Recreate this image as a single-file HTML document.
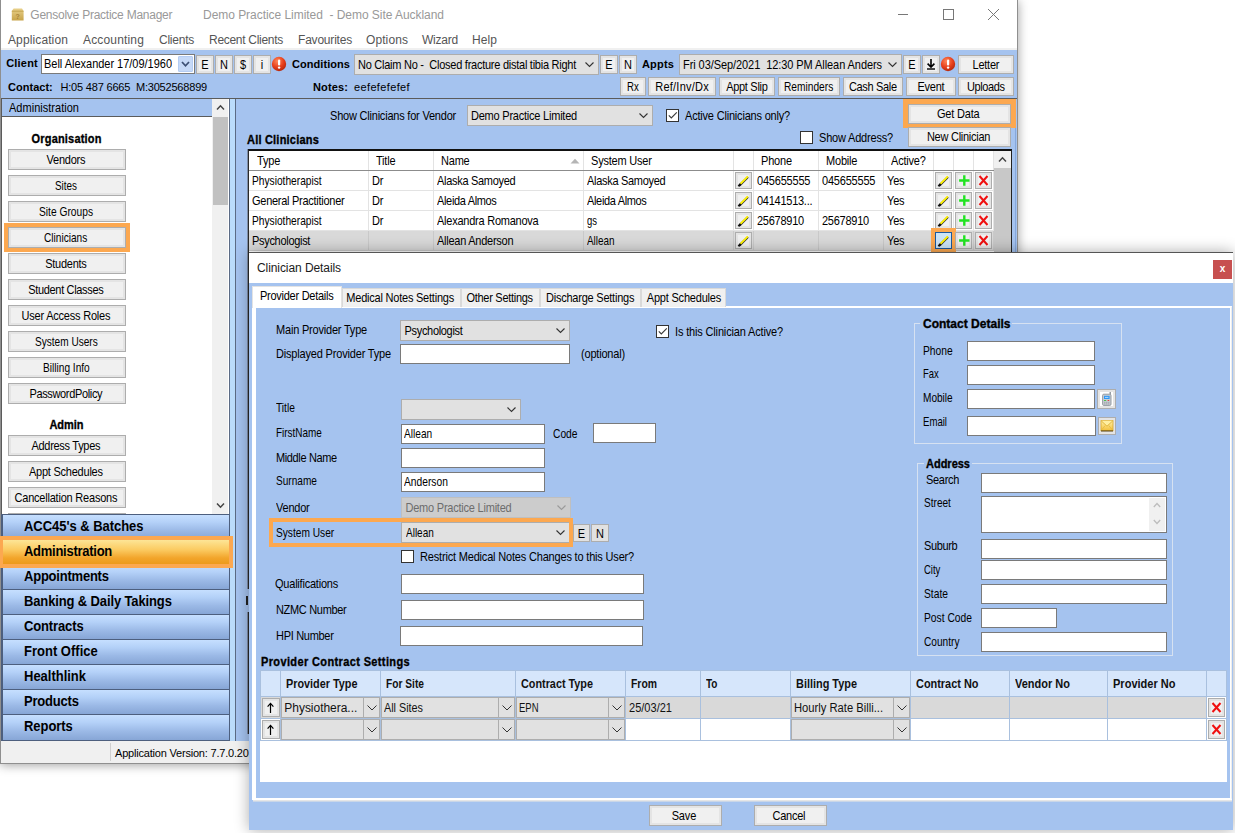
<!DOCTYPE html>
<html><head><meta charset='utf-8'><title>Gensolve Practice Manager</title><style>
html,body{margin:0;padding:0;background:#fff;}
body{width:1235px;height:833px;position:relative;overflow:hidden;font-family:'Liberation Sans',sans-serif;}
div,svg,span.t{position:absolute;}
span.t{white-space:pre;}
.btn{box-sizing:border-box;border:1px solid #ADADAD;background:#F0F0F0;box-shadow:inset 0 0 0 2px #E4E4E4;}
</style></head><body>
<div style='left:0px;top:0px;width:1018px;height:764px;background:#fff;box-shadow:0 1px 10px rgba(0,0,0,.38);'></div>
<div style='left:0px;top:0px;width:1px;height:764px;background:#8f8f8f'></div>
<div style='left:1017px;top:0px;width:1px;height:764px;background:#8f8f8f'></div>
<div style='left:0px;top:763px;width:1018px;height:1px;background:#8f8f8f'></div>
<svg style='left:11px;top:8px' width='13' height='13' viewBox='0 0 13 13'><defs><linearGradient id='tg' x1='0' y1='0' x2='0' y2='1'><stop offset='0' stop-color='#E8D08A'/><stop offset='1' stop-color='#C7A349'/></linearGradient></defs><path d='M0.8 3 L2.6 0.6 H11 L12.6 3 V12.6 H0.8 Z' fill='url(#tg)'/><path d='M0.8 3.2 H12.6' stroke='#B8963E' stroke-width='0.7'/><text x='6.7' y='10.8' font-size='7' font-family='Liberation Sans' fill='#A8853A' text-anchor='middle' font-weight='bold'>?</text></svg>
<span class='t' style="top:7px;line-height:16px;height:16px;font:normal 12px/16px 'Liberation Sans',sans-serif;color:#999;letter-spacing:-0.243px;left:30.3px;">Gensolve Practice Manager</span>
<span class='t' style="top:7px;line-height:16px;height:16px;font:normal 12px/16px 'Liberation Sans',sans-serif;color:#999;letter-spacing:-0.041px;left:203px;">Demo Practice Limited  - Demo Site Auckland</span>
<svg style='left:897px;top:9px' width='12' height='12' viewBox='0 0 12 12'><path d='M1 5.5 H11' stroke='#777' stroke-width='1'/></svg>
<svg style='left:942px;top:8px' width='12' height='12' viewBox='0 0 12 12'><rect x='1.5' y='1.5' width='10' height='10' fill='none' stroke='#777' stroke-width='1'/></svg>
<svg style='left:987px;top:8px' width='13' height='13' viewBox='0 0 13 13'><path d='M1 1 L12 12 M12 1 L1 12' stroke='#777' stroke-width='1'/></svg>
<span class='t' style="top:32px;line-height:16px;height:16px;font:normal 12px/16px 'Liberation Sans',sans-serif;color:#555;letter-spacing:0.116px;left:8px;">Application</span>
<span class='t' style="top:32px;line-height:16px;height:16px;font:normal 12px/16px 'Liberation Sans',sans-serif;color:#555;letter-spacing:0.163px;left:83px;">Accounting</span>
<span class='t' style="top:32px;line-height:16px;height:16px;font:normal 12px/16px 'Liberation Sans',sans-serif;color:#555;letter-spacing:-0.241px;left:159px;">Clients</span>
<span class='t' style="top:32px;line-height:16px;height:16px;font:normal 12px/16px 'Liberation Sans',sans-serif;color:#555;letter-spacing:-0.289px;left:209px;">Recent Clients</span>
<span class='t' style="top:32px;line-height:16px;height:16px;font:normal 12px/16px 'Liberation Sans',sans-serif;color:#555;letter-spacing:-0.203px;left:298px;">Favourites</span>
<span class='t' style="top:32px;line-height:16px;height:16px;font:normal 12px/16px 'Liberation Sans',sans-serif;color:#555;letter-spacing:0.092px;left:366px;">Options</span>
<span class='t' style="top:32px;line-height:16px;height:16px;font:normal 12px/16px 'Liberation Sans',sans-serif;color:#555;letter-spacing:-0.224px;left:422px;">Wizard</span>
<span class='t' style="top:32px;line-height:16px;height:16px;font:normal 12px/16px 'Liberation Sans',sans-serif;color:#555;letter-spacing:0.078px;left:472px;">Help</span>
<div style='left:1px;top:48px;width:1016px;height:2px;background:#F0F0F0'></div>
<div style='left:1px;top:50px;width:1016px;height:48px;background:#A5C3EF'></div>
<span class='t' style="top:55.5px;line-height:15px;height:15px;font:bold 11px/15px 'Liberation Sans',sans-serif;color:#000;letter-spacing:0.206px;left:6.2px;">Client</span>
<div style='left:41px;top:54px;width:154px;height:20px;background:#fff;border:1px solid #7A7A7A;box-sizing:border-box'></div>
<span class='t' style="top:57px;line-height:15px;height:15px;font:normal 11px/15px 'Liberation Sans',sans-serif;color:#000;letter-spacing:-0.018px;left:44px;transform:scale(1.0000,1.09);transform-origin:0 11.31px;">Bell Alexander 17/09/1960</span>
<div style='left:178px;top:56px;width:15px;height:16px;background:#C6D9F7;border:1px solid #B4CCF3;box-sizing:border-box;border-radius:1px'></div>
<svg style='left:181px;top:61px' width='9' height='7' viewBox='0 0 9 7'><path d='M1 1 L4.5 4.8 L8 1' fill='none' stroke='#3C4F73' stroke-width='1.7'/></svg>
<div class='btn' style='left:196px;top:55px;width:18px;height:19px;'></div>
<span class='t' style="top:58.2px;line-height:15px;height:15px;font:normal 11px/15px 'Liberation Sans',sans-serif;color:#000;left:201.33px;transform:scale(1.0000,1.09);transform-origin:0 11.31px;">E</span>
<div class='btn' style='left:215px;top:55px;width:18px;height:19px;'></div>
<span class='t' style="top:58.2px;line-height:15px;height:15px;font:normal 11px/15px 'Liberation Sans',sans-serif;color:#000;left:220.02px;transform:scale(1.0000,1.09);transform-origin:0 11.31px;">N</span>
<div class='btn' style='left:234px;top:55px;width:18px;height:19px;'></div>
<span class='t' style="top:58.2px;line-height:15px;height:15px;font:normal 11px/15px 'Liberation Sans',sans-serif;color:#000;left:239.94px;transform:scale(1.0000,1.09);transform-origin:0 11.31px;">$</span>
<div class='btn' style='left:253px;top:55px;width:18px;height:19px;'></div>
<span class='t' style="top:58.2px;line-height:15px;height:15px;font:normal 11px/15px 'Liberation Sans',sans-serif;color:#000;left:260.77px;transform:scale(1.0000,1.09);transform-origin:0 11.31px;">i</span>
<svg style='left:271px;top:56px' width='16' height='16' viewBox='0 0 16 16'><defs><radialGradient id='rg279' cx='40%' cy='30%' r='70%'><stop offset='0' stop-color='#FF8A5C'/><stop offset='0.6' stop-color='#E8401C'/><stop offset='1' stop-color='#B82A0E'/></radialGradient></defs><circle cx='8' cy='8' r='7.2' fill='url(#rg279)'/><rect x='7' y='3.5' width='2.2' height='6' rx='1' fill='#fff'/><circle cx='8.1' cy='11.6' r='1.2' fill='#fff'/></svg>
<span class='t' style="top:56.5px;line-height:15px;height:15px;font:bold 11px/15px 'Liberation Sans',sans-serif;color:#000;letter-spacing:0.056px;left:292px;">Conditions</span>
<div style='left:354px;top:54px;width:245px;height:21px;background:#E1E1E1;border:1px solid #ADADAD;box-sizing:border-box'></div>
<span class='t' style="top:57.75px;line-height:15px;height:15px;font:normal 11px/15px 'Liberation Sans',sans-serif;color:#000;letter-spacing:-0.255px;left:358px;transform:scale(1.0000,1.09);transform-origin:0 11.31px;">No Claim No -  Closed fracture distal tibia Right</span>
<svg style='left:585px;top:62.0px' width='9' height='6' viewBox='0 0 9 6'><path d='M0.5 0.5 L4.5 4.5 L8.5 0.5' fill='none' stroke='#333' stroke-width='1.1'/></svg>
<div class='btn' style='left:600px;top:55px;width:18px;height:19px;'></div>
<span class='t' style="top:58.2px;line-height:15px;height:15px;font:normal 11px/15px 'Liberation Sans',sans-serif;color:#000;left:605.33px;transform:scale(1.0000,1.09);transform-origin:0 11.31px;">E</span>
<div class='btn' style='left:619px;top:55px;width:18px;height:19px;'></div>
<span class='t' style="top:58.2px;line-height:15px;height:15px;font:normal 11px/15px 'Liberation Sans',sans-serif;color:#000;left:624.02px;transform:scale(1.0000,1.09);transform-origin:0 11.31px;">N</span>
<span class='t' style="top:56.5px;line-height:15px;height:15px;font:bold 11px/15px 'Liberation Sans',sans-serif;color:#000;letter-spacing:0.166px;left:642px;">Appts</span>
<div style='left:679px;top:54px;width:223px;height:21px;background:#E1E1E1;border:1px solid #ADADAD;box-sizing:border-box'></div>
<span class='t' style="top:57.75px;line-height:15px;height:15px;font:normal 11px/15px 'Liberation Sans',sans-serif;color:#000;letter-spacing:-0.072px;left:683px;transform:scale(1.0000,1.09);transform-origin:0 11.31px;">Fri 03/Sep/2021  12:30 PM Allean Anders</span>
<svg style='left:888px;top:62.0px' width='9' height='6' viewBox='0 0 9 6'><path d='M0.5 0.5 L4.5 4.5 L8.5 0.5' fill='none' stroke='#333' stroke-width='1.1'/></svg>
<div class='btn' style='left:903px;top:55px;width:18px;height:19px;'></div>
<span class='t' style="top:58.2px;line-height:15px;height:15px;font:normal 11px/15px 'Liberation Sans',sans-serif;color:#000;left:908.33px;transform:scale(1.0000,1.09);transform-origin:0 11.31px;">E</span>
<div class='btn' style='left:922px;top:55px;width:18px;height:19px;'></div>
<svg style='left:924px;top:57px' width='14' height='14' viewBox='0 0 14 14'><path d='M7 2 V9.5 M3.6 6.6 L7 10 L10.4 6.6' fill='none' stroke='#000' stroke-width='1.6'/><path d='M3 12 H11' stroke='#000' stroke-width='1.4'/></svg>
<svg style='left:940px;top:56px' width='16' height='16' viewBox='0 0 16 16'><defs><radialGradient id='rg948' cx='40%' cy='30%' r='70%'><stop offset='0' stop-color='#FF8A5C'/><stop offset='0.6' stop-color='#E8401C'/><stop offset='1' stop-color='#B82A0E'/></radialGradient></defs><circle cx='8' cy='8' r='7.2' fill='url(#rg948)'/><rect x='7' y='3.5' width='2.2' height='6' rx='1' fill='#fff'/><circle cx='8.1' cy='11.6' r='1.2' fill='#fff'/></svg>
<div class='btn' style='left:958px;top:55px;width:56px;height:19px;'></div>
<span class='t' style="top:57.5px;line-height:15px;height:15px;font:normal 11px/15px 'Liberation Sans',sans-serif;color:#000;letter-spacing:-0.232px;left:972.51px;transform:scale(1.0000,1.09);transform-origin:0 11.31px;">Letter</span>
<span class='t' style="top:79.5px;line-height:15px;height:15px;font:bold 11px/15px 'Liberation Sans',sans-serif;color:#000;letter-spacing:0.024px;left:8px;">Contact:</span>
<span class='t' style="top:79.5px;line-height:15px;height:15px;font:normal 11px/15px 'Liberation Sans',sans-serif;color:#000;letter-spacing:-0.192px;left:60.5px;">H:05 487 6665  M:3052568899</span>
<span class='t' style="top:79.5px;line-height:15px;height:15px;font:bold 11px/15px 'Liberation Sans',sans-serif;color:#000;letter-spacing:0.128px;left:313px;">Notes:</span>
<span class='t' style="top:79.5px;line-height:15px;height:15px;font:normal 11px/15px 'Liberation Sans',sans-serif;color:#000;letter-spacing:0.364px;left:354px;">eefefefefef</span>
<div class='btn' style='left:620px;top:77px;width:26px;height:19px;'></div>
<span class='t' style="top:79.75px;line-height:15px;height:15px;font:normal 11px/15px 'Liberation Sans',sans-serif;color:#000;left:627.12px;transform:scale(0.8734,1.09);transform-origin:0 11.31px;">Rx</span>
<div class='btn' style='left:648px;top:77px;width:68px;height:19px;'></div>
<span class='t' style="top:79.75px;line-height:15px;height:15px;font:normal 11px/15px 'Liberation Sans',sans-serif;color:#000;letter-spacing:0.239px;left:655.24px;transform:scale(1.0000,1.09);transform-origin:0 11.31px;">Ref/Inv/Dx</span>
<div class='btn' style='left:719px;top:77px;width:56px;height:19px;'></div>
<span class='t' style="top:79.75px;line-height:15px;height:15px;font:normal 11px/15px 'Liberation Sans',sans-serif;color:#000;letter-spacing:-0.309px;left:726.22px;transform:scale(1.0000,1.09);transform-origin:0 11.31px;">Appt Slip</span>
<div class='btn' style='left:778px;top:77px;width:62px;height:19px;'></div>
<span class='t' style="top:79.75px;line-height:15px;height:15px;font:normal 11px/15px 'Liberation Sans',sans-serif;color:#000;left:784.38px;transform:scale(0.9260,1.09);transform-origin:0 11.31px;">Reminders</span>
<div class='btn' style='left:843px;top:77px;width:60px;height:19px;'></div>
<span class='t' style="top:79.75px;line-height:15px;height:15px;font:normal 11px/15px 'Liberation Sans',sans-serif;color:#000;letter-spacing:-0.335px;left:848.96px;transform:scale(1.0000,1.09);transform-origin:0 11.31px;">Cash Sale</span>
<div class='btn' style='left:906px;top:77px;width:50px;height:19px;'></div>
<span class='t' style="top:79.75px;line-height:15px;height:15px;font:normal 11px/15px 'Liberation Sans',sans-serif;color:#000;letter-spacing:-0.228px;left:917.39px;transform:scale(1.0000,1.09);transform-origin:0 11.31px;">Event</span>
<div class='btn' style='left:958px;top:77px;width:56px;height:19px;'></div>
<span class='t' style="top:79.75px;line-height:15px;height:15px;font:normal 11px/15px 'Liberation Sans',sans-serif;color:#000;letter-spacing:-0.373px;left:966.94px;transform:scale(1.0000,1.09);transform-origin:0 11.31px;">Uploads</span>
<div style='left:1px;top:98px;width:1016px;height:643px;background:#A5C3EF'></div>
<div style='left:1015px;top:98px;width:1px;height:643px;background:#86A8DC'></div>
<div style='left:1px;top:98px;width:229px;height:417px;background:#fff;border:1px solid #5b5b5b;box-sizing:border-box'></div>
<div style='left:2px;top:99px;width:210px;height:17px;background:#A5C3EF'></div>
<div style='left:2px;top:116px;width:210px;height:1px;background:#5b5b5b'></div>
<span class='t' style="top:100.5px;line-height:15px;height:15px;font:normal 11px/15px 'Liberation Sans',sans-serif;color:#000;letter-spacing:0.021px;left:9px;transform:scale(1.0000,1.09);transform-origin:0 11.31px;">Administration</span>
<div style='left:212px;top:99px;width:16px;height:415px;background:#F0F0F0'></div>
<div style='left:213px;top:117px;width:15px;height:88px;background:#C1C1C1'></div>
<svg style='left:216px;top:104px' width='9' height='7' viewBox='0 0 9 7'><path d='M1 5.5 L4.5 1.8 L8 5.5' fill='none' stroke='#444' stroke-width='1.5'/></svg>
<svg style='left:216px;top:502px' width='9' height='7' viewBox='0 0 9 7'><path d='M1 1.5 L4.5 5.2 L8 1.5' fill='none' stroke='#444' stroke-width='1.5'/></svg>
<span class='t' style="top:131.5px;line-height:15px;height:15px;font:bold 11px/15px 'Liberation Sans',sans-serif;color:#000;letter-spacing:0.180px;left:31.59px;transform:scale(1.0000,1.09);transform-origin:0 11.31px;-webkit-text-stroke:0.3px #000;">Organisation</span>
<div style='left:4px;top:223px;width:126px;height:29px;background:#FCA850'></div>
<div class='btn' style='left:8px;top:149px;width:118px;height:21px;'></div>
<span class='t' style="top:153.3px;line-height:15px;height:15px;font:normal 11px/15px 'Liberation Sans',sans-serif;color:#000;letter-spacing:-0.232px;left:46.51px;transform:scale(1.0000,1.09);transform-origin:0 11.31px;">Vendors</span>
<div class='btn' style='left:8px;top:175px;width:118px;height:21px;'></div>
<span class='t' style="top:179.3px;line-height:15px;height:15px;font:normal 11px/15px 'Liberation Sans',sans-serif;color:#000;left:55.00px;transform:scale(0.8991,1.09);transform-origin:0 11.31px;">Sites</span>
<div class='btn' style='left:8px;top:201px;width:118px;height:21px;'></div>
<span class='t' style="top:205.3px;line-height:15px;height:15px;font:normal 11px/15px 'Liberation Sans',sans-serif;color:#000;left:39.00px;transform:scale(0.9295,1.09);transform-origin:0 11.31px;">Site Groups</span>
<div class='btn' style='left:8px;top:227px;width:118px;height:21px;'></div>
<span class='t' style="top:231.3px;line-height:15px;height:15px;font:normal 11px/15px 'Liberation Sans',sans-serif;color:#000;left:44.38px;transform:scale(0.9187,1.09);transform-origin:0 11.31px;">Clinicians</span>
<div class='btn' style='left:8px;top:253px;width:118px;height:21px;'></div>
<span class='t' style="top:257.3px;line-height:15px;height:15px;font:normal 11px/15px 'Liberation Sans',sans-serif;color:#000;letter-spacing:-0.271px;left:45.24px;transform:scale(1.0000,1.09);transform-origin:0 11.31px;">Students</span>
<div class='btn' style='left:8px;top:279px;width:118px;height:21px;'></div>
<span class='t' style="top:283.3px;line-height:15px;height:15px;font:normal 11px/15px 'Liberation Sans',sans-serif;color:#000;letter-spacing:-0.341px;left:28.33px;transform:scale(1.0000,1.09);transform-origin:0 11.31px;">Student Classes</span>
<div class='btn' style='left:8px;top:305px;width:118px;height:21px;'></div>
<span class='t' style="top:309.3px;line-height:15px;height:15px;font:normal 11px/15px 'Liberation Sans',sans-serif;color:#000;letter-spacing:-0.210px;left:21.52px;transform:scale(1.0000,1.09);transform-origin:0 11.31px;">User Access Roles</span>
<div class='btn' style='left:8px;top:331px;width:118px;height:21px;'></div>
<span class='t' style="top:335.3px;line-height:15px;height:15px;font:normal 11px/15px 'Liberation Sans',sans-serif;color:#000;left:34.62px;transform:scale(0.9165,1.09);transform-origin:0 11.31px;">System Users</span>
<div class='btn' style='left:8px;top:357px;width:118px;height:21px;'></div>
<span class='t' style="top:361.3px;line-height:15px;height:15px;font:normal 11px/15px 'Liberation Sans',sans-serif;color:#000;left:42.62px;transform:scale(0.9209,1.09);transform-origin:0 11.31px;">Billing Info</span>
<div class='btn' style='left:8px;top:383px;width:118px;height:21px;'></div>
<span class='t' style="top:387.3px;line-height:15px;height:15px;font:normal 11px/15px 'Liberation Sans',sans-serif;color:#000;letter-spacing:-0.349px;left:29.45px;transform:scale(1.0000,1.09);transform-origin:0 11.31px;">PasswordPolicy</span>
<span class='t' style="top:417.5px;line-height:15px;height:15px;font:bold 11px/15px 'Liberation Sans',sans-serif;color:#000;letter-spacing:-0.047px;left:49.48px;transform:scale(1.0000,1.09);transform-origin:0 11.31px;-webkit-text-stroke:0.3px #000;">Admin</span>
<div class='btn' style='left:8px;top:435px;width:118px;height:21px;'></div>
<span class='t' style="top:439.3px;line-height:15px;height:15px;font:normal 11px/15px 'Liberation Sans',sans-serif;color:#000;letter-spacing:-0.293px;left:31.48px;transform:scale(1.0000,1.09);transform-origin:0 11.31px;">Address Types</span>
<div class='btn' style='left:8px;top:461px;width:118px;height:21px;'></div>
<span class='t' style="top:465.3px;line-height:15px;height:15px;font:normal 11px/15px 'Liberation Sans',sans-serif;color:#000;letter-spacing:-0.237px;left:29.01px;transform:scale(1.0000,1.09);transform-origin:0 11.31px;">Appt Schedules</span>
<div class='btn' style='left:8px;top:487px;width:118px;height:21px;'></div>
<span class='t' style="top:491.3px;line-height:15px;height:15px;font:normal 11px/15px 'Liberation Sans',sans-serif;color:#000;letter-spacing:-0.213px;left:14.52px;transform:scale(1.0000,1.09);transform-origin:0 11.31px;">Cancellation Reasons</span>
<div style='left:8px;top:513px;width:118px;height:1px;background:#ADADAD'></div>
<div style='left:230px;top:98px;width:5px;height:643px;background:#BBDCFB'></div>
<div style='left:229px;top:98px;width:1px;height:643px;background:#5b6b85'></div>
<div style='left:235px;top:98px;width:1px;height:643px;background:#5b6b85'></div>
<div style='left:1px;top:98px;width:1016px;height:1px;background:#5b5b5b'></div>
<div style='left:1px;top:514px;width:229px;height:227px;background:#4d5f7e'></div>
<div style='left:3px;top:515px;width:226px;height:24px;background:linear-gradient(#C6DFFF 0%,#B4D1F8 30%,#9BB9E6 65%,#87A6D6 100%)'></div>
<div style='left:3px;top:540px;width:226px;height:24px;background:linear-gradient(#C6DFFF 0%,#B4D1F8 30%,#9BB9E6 65%,#87A6D6 100%)'></div>
<div style='left:3px;top:565px;width:226px;height:24px;background:linear-gradient(#C6DFFF 0%,#B4D1F8 30%,#9BB9E6 65%,#87A6D6 100%)'></div>
<div style='left:3px;top:590px;width:226px;height:24px;background:linear-gradient(#C6DFFF 0%,#B4D1F8 30%,#9BB9E6 65%,#87A6D6 100%)'></div>
<div style='left:3px;top:615px;width:226px;height:24px;background:linear-gradient(#C6DFFF 0%,#B4D1F8 30%,#9BB9E6 65%,#87A6D6 100%)'></div>
<div style='left:3px;top:640px;width:226px;height:24px;background:linear-gradient(#C6DFFF 0%,#B4D1F8 30%,#9BB9E6 65%,#87A6D6 100%)'></div>
<div style='left:3px;top:665px;width:226px;height:24px;background:linear-gradient(#C6DFFF 0%,#B4D1F8 30%,#9BB9E6 65%,#87A6D6 100%)'></div>
<div style='left:3px;top:690px;width:226px;height:24px;background:linear-gradient(#C6DFFF 0%,#B4D1F8 30%,#9BB9E6 65%,#87A6D6 100%)'></div>
<div style='left:3px;top:715px;width:226px;height:25px;background:linear-gradient(#C6DFFF 0%,#B4D1F8 30%,#9BB9E6 65%,#87A6D6 100%)'></div>
<div style='left:0px;top:536px;width:233px;height:32px;background:#FCA850'></div>
<div style='left:3px;top:540px;width:226px;height:24px;background:linear-gradient(#FDE596 0%,#FBCB62 40%,#F2A52B 75%,#EC9A1C 100%)'></div>
<span class='t' style="top:517.5px;line-height:17px;height:17px;font:bold 13px/17px 'Liberation Sans',sans-serif;color:#000;letter-spacing:-0.038px;left:24px;transform:scale(1.0000,1.1);transform-origin:0 13.00px;">ACC45&#x27;s &amp; Batches</span>
<span class='t' style="top:542.5px;line-height:17px;height:17px;font:bold 13px/17px 'Liberation Sans',sans-serif;color:#000;letter-spacing:-0.267px;left:24px;transform:scale(1.0000,1.1);transform-origin:0 13.00px;">Administration</span>
<span class='t' style="top:567.5px;line-height:17px;height:17px;font:bold 13px/17px 'Liberation Sans',sans-serif;color:#000;letter-spacing:-0.220px;left:24px;transform:scale(1.0000,1.1);transform-origin:0 13.00px;">Appointments</span>
<span class='t' style="top:592.5px;line-height:17px;height:17px;font:bold 13px/17px 'Liberation Sans',sans-serif;color:#000;letter-spacing:-0.130px;left:24px;transform:scale(1.0000,1.1);transform-origin:0 13.00px;">Banking &amp; Daily Takings</span>
<span class='t' style="top:617.5px;line-height:17px;height:17px;font:bold 13px/17px 'Liberation Sans',sans-serif;color:#000;letter-spacing:-0.132px;left:24px;transform:scale(1.0000,1.1);transform-origin:0 13.00px;">Contracts</span>
<span class='t' style="top:642.5px;line-height:17px;height:17px;font:bold 13px/17px 'Liberation Sans',sans-serif;color:#000;letter-spacing:0.007px;left:24px;transform:scale(1.0000,1.1);transform-origin:0 13.00px;">Front Office</span>
<span class='t' style="top:667.5px;line-height:17px;height:17px;font:bold 13px/17px 'Liberation Sans',sans-serif;color:#000;letter-spacing:-0.013px;left:24px;transform:scale(1.0000,1.1);transform-origin:0 13.00px;">Healthlink</span>
<span class='t' style="top:692.5px;line-height:17px;height:17px;font:bold 13px/17px 'Liberation Sans',sans-serif;color:#000;letter-spacing:-0.199px;left:24px;transform:scale(1.0000,1.1);transform-origin:0 13.00px;">Products</span>
<span class='t' style="top:717.5px;line-height:17px;height:17px;font:bold 13px/17px 'Liberation Sans',sans-serif;color:#000;letter-spacing:-0.054px;left:24px;transform:scale(1.0000,1.1);transform-origin:0 13.00px;">Reports</span>
<div style='left:1px;top:741px;width:1016px;height:22px;background:#F0F0F0'></div>
<div style='left:110px;top:743px;width:1px;height:18px;background:#D0D0D0'></div>
<span class='t' style="top:745.8px;line-height:15px;height:15px;font:normal 11px/15px 'Liberation Sans',sans-serif;color:#000;letter-spacing:-0.200px;left:115px;">Application Version: 7.7.0.2021</span>
<span class='t' style="top:108.5px;line-height:15px;height:15px;font:normal 11px/15px 'Liberation Sans',sans-serif;color:#000;letter-spacing:-0.210px;left:330px;transform:scale(1.0000,1.09);transform-origin:0 11.31px;">Show Clinicians for Vendor</span>
<div style='left:467px;top:105px;width:186px;height:21px;background:#E1E1E1;border:1px solid #ADADAD;box-sizing:border-box'></div>
<span class='t' style="top:108.75px;line-height:15px;height:15px;font:normal 11px/15px 'Liberation Sans',sans-serif;color:#000;letter-spacing:-0.222px;left:471px;transform:scale(1.0000,1.09);transform-origin:0 11.31px;">Demo Practice Limited</span>
<svg style='left:639px;top:113.0px' width='9' height='6' viewBox='0 0 9 6'><path d='M0.5 0.5 L4.5 4.5 L8.5 0.5' fill='none' stroke='#333' stroke-width='1.1'/></svg>
<div style='left:666px;top:109px;width:13px;height:13px;background:#fff;border:1px solid #333;box-sizing:border-box'><svg width='13' height='13' viewBox='0 0 13 13' style='left:-1px;top:-1px'><path d='M2.8 6.4 L5.3 8.9 L10.8 3.3' fill='none' stroke='#3a3a3a' stroke-width='1.15'/></svg></div>
<span class='t' style="top:108.5px;line-height:15px;height:15px;font:normal 11px/15px 'Liberation Sans',sans-serif;color:#000;letter-spacing:-0.193px;left:685px;transform:scale(1.0000,1.09);transform-origin:0 11.31px;">Active Clinicians only?</span>
<div style='left:903px;top:99px;width:113px;height:29px;background:#FCA850'></div>
<div class='btn' style='left:908px;top:104px;width:103px;height:20px;'></div>
<span class='t' style="top:106.7px;line-height:15px;height:15px;font:normal 11px/15px 'Liberation Sans',sans-serif;color:#000;letter-spacing:-0.191px;left:936.95px;transform:scale(1.0000,1.09);transform-origin:0 11.31px;">Get Data</span>
<div class='btn' style='left:908px;top:127px;width:103px;height:20px;'></div>
<span class='t' style="top:129.7px;line-height:15px;height:15px;font:normal 11px/15px 'Liberation Sans',sans-serif;color:#000;letter-spacing:-0.261px;left:926.94px;transform:scale(1.0000,1.09);transform-origin:0 11.31px;">New Clinician</span>
<div style='left:800px;top:131px;width:13px;height:13px;background:#fff;border:1px solid #333;box-sizing:border-box'></div>
<span class='t' style="top:130.5px;line-height:15px;height:15px;font:normal 11px/15px 'Liberation Sans',sans-serif;color:#000;letter-spacing:-0.188px;left:819px;transform:scale(1.0000,1.09);transform-origin:0 11.31px;">Show Address?</span>
<span class='t' style="top:132.5px;line-height:15px;height:15px;font:bold 11px/15px 'Liberation Sans',sans-serif;color:#000;letter-spacing:0.209px;left:247px;transform:scale(1.0000,1.09);transform-origin:0 11.31px;-webkit-text-stroke:0.3px #000;">All Clinicians</span>
<div style='left:247px;top:149px;width:765px;height:110px;background:#fff;border:1px solid #222;border-top:2px solid #111;border-left:2px solid #2a2a2a;box-sizing:border-box'></div>
<div style='left:247px;top:149px;width:1px;height:110px;background:#7f8da6'></div>
<div style='left:249px;top:170px;width:745px;height:1px;background:#8c8c8c'></div>
<div style='left:368px;top:151px;width:1px;height:19px;background:#E3E3E3'></div>
<div style='left:433px;top:151px;width:1px;height:19px;background:#E3E3E3'></div>
<div style='left:583px;top:151px;width:1px;height:19px;background:#E3E3E3'></div>
<div style='left:733px;top:151px;width:1px;height:19px;background:#E3E3E3'></div>
<div style='left:753px;top:151px;width:1px;height:19px;background:#E3E3E3'></div>
<div style='left:818px;top:151px;width:1px;height:19px;background:#E3E3E3'></div>
<div style='left:883px;top:151px;width:1px;height:19px;background:#E3E3E3'></div>
<div style='left:933px;top:151px;width:1px;height:19px;background:#E3E3E3'></div>
<div style='left:953px;top:151px;width:1px;height:19px;background:#E3E3E3'></div>
<div style='left:973px;top:151px;width:1px;height:19px;background:#E3E3E3'></div>
<div style='left:993px;top:151px;width:1px;height:19px;background:#E3E3E3'></div>
<span class='t' style="top:153.5px;line-height:15px;height:15px;font:normal 11px/15px 'Liberation Sans',sans-serif;color:#000;letter-spacing:-0.200px;left:257px;transform:scale(1.0000,1.09);transform-origin:0 11.31px;">Type</span>
<span class='t' style="top:153.5px;line-height:15px;height:15px;font:normal 11px/15px 'Liberation Sans',sans-serif;color:#000;letter-spacing:-0.200px;left:376px;transform:scale(1.0000,1.09);transform-origin:0 11.31px;">Title</span>
<span class='t' style="top:153.5px;line-height:15px;height:15px;font:normal 11px/15px 'Liberation Sans',sans-serif;color:#000;letter-spacing:-0.200px;left:441px;transform:scale(1.0000,1.09);transform-origin:0 11.31px;">Name</span>
<span class='t' style="top:153.5px;line-height:15px;height:15px;font:normal 11px/15px 'Liberation Sans',sans-serif;color:#000;letter-spacing:-0.200px;left:591px;transform:scale(1.0000,1.09);transform-origin:0 11.31px;">System User</span>
<span class='t' style="top:153.5px;line-height:15px;height:15px;font:normal 11px/15px 'Liberation Sans',sans-serif;color:#000;letter-spacing:-0.200px;left:761px;transform:scale(1.0000,1.09);transform-origin:0 11.31px;">Phone</span>
<span class='t' style="top:153.5px;line-height:15px;height:15px;font:normal 11px/15px 'Liberation Sans',sans-serif;color:#000;letter-spacing:-0.200px;left:826px;transform:scale(1.0000,1.09);transform-origin:0 11.31px;">Mobile</span>
<span class='t' style="top:153.5px;line-height:15px;height:15px;font:normal 11px/15px 'Liberation Sans',sans-serif;color:#000;letter-spacing:-0.200px;left:891px;transform:scale(1.0000,1.09);transform-origin:0 11.31px;">Active?</span>
<svg style='left:570px;top:158px' width='10' height='6' viewBox='0 0 10 6'><path d='M0.5 5.5 L5 0.8 L9.5 5.5 Z' fill='#B5B5B5'/></svg>
<div style='left:249px;top:190px;width:745px;height:1px;background:#E3E3E3'></div>
<div style='left:368px;top:171px;width:1px;height:20px;background:#E3E3E3'></div>
<div style='left:433px;top:171px;width:1px;height:20px;background:#E3E3E3'></div>
<div style='left:583px;top:171px;width:1px;height:20px;background:#E3E3E3'></div>
<div style='left:733px;top:171px;width:1px;height:20px;background:#E3E3E3'></div>
<div style='left:753px;top:171px;width:1px;height:20px;background:#E3E3E3'></div>
<div style='left:818px;top:171px;width:1px;height:20px;background:#E3E3E3'></div>
<div style='left:883px;top:171px;width:1px;height:20px;background:#E3E3E3'></div>
<div style='left:933px;top:171px;width:1px;height:20px;background:#E3E3E3'></div>
<div style='left:953px;top:171px;width:1px;height:20px;background:#E3E3E3'></div>
<div style='left:973px;top:171px;width:1px;height:20px;background:#E3E3E3'></div>
<div style='left:993px;top:171px;width:1px;height:20px;background:#E3E3E3'></div>
<span class='t' style="top:173.7px;line-height:15px;height:15px;font:normal 11px/15px 'Liberation Sans',sans-serif;color:#000;left:252px;transform:scale(0.9266,1.09);transform-origin:0 11.31px;">Physiotherapist</span>
<span class='t' style="top:173.7px;line-height:15px;height:15px;font:normal 11px/15px 'Liberation Sans',sans-serif;color:#000;letter-spacing:-0.200px;left:372px;transform:scale(1.0000,1.09);transform-origin:0 11.31px;">Dr</span>
<span class='t' style="top:173.7px;line-height:15px;height:15px;font:normal 11px/15px 'Liberation Sans',sans-serif;color:#000;letter-spacing:-0.303px;left:437px;transform:scale(1.0000,1.09);transform-origin:0 11.31px;">Alaska Samoyed</span>
<span class='t' style="top:173.7px;line-height:15px;height:15px;font:normal 11px/15px 'Liberation Sans',sans-serif;color:#000;letter-spacing:-0.303px;left:587px;transform:scale(1.0000,1.09);transform-origin:0 11.31px;">Alaska Samoyed</span>
<span class='t' style="top:173.7px;line-height:15px;height:15px;font:normal 11px/15px 'Liberation Sans',sans-serif;color:#000;letter-spacing:-0.201px;left:757px;transform:scale(1.0000,1.09);transform-origin:0 11.31px;">045655555</span>
<span class='t' style="top:173.7px;line-height:15px;height:15px;font:normal 11px/15px 'Liberation Sans',sans-serif;color:#000;letter-spacing:-0.201px;left:822px;transform:scale(1.0000,1.09);transform-origin:0 11.31px;">045655555</span>
<span class='t' style="top:173.7px;line-height:15px;height:15px;font:normal 11px/15px 'Liberation Sans',sans-serif;color:#000;letter-spacing:-0.200px;left:887px;transform:scale(1.0000,1.09);transform-origin:0 11.31px;">Yes</span>
<div class='btn' style='left:735px;top:172px;width:17px;height:17px;'></div>
<svg style='left:735px;top:172px' width='17' height='17' viewBox='0 0 17 17'><path d='M4.6 13.4 L13 5' stroke='#333' stroke-width='2.2'/><path d='M5.4 11.8 L12.9 4.3' stroke='#FFF200' stroke-width='1.8'/><path d='M3.4 14.2 L5.6 12' stroke='#111' stroke-width='2'/></svg>
<div class='btn' style='left:935px;top:172px;width:17px;height:17px;'></div>
<svg style='left:935px;top:172px' width='17' height='17' viewBox='0 0 17 17'><path d='M4.6 13.4 L13 5' stroke='#333' stroke-width='2.2'/><path d='M5.4 11.8 L12.9 4.3' stroke='#FFF200' stroke-width='1.8'/><path d='M3.4 14.2 L5.6 12' stroke='#111' stroke-width='2'/></svg>
<div class='btn' style='left:955px;top:172px;width:17px;height:17px;'></div>
<svg style='left:955px;top:172px' width='17' height='17' viewBox='0 0 17 17'><path d='M9.3 3.3 V13.7 M4.1 8.5 H14.5' stroke='#22E322' stroke-width='2.4'/></svg>
<div class='btn' style='left:975px;top:172px;width:17px;height:17px;'></div>
<svg style='left:975px;top:172px' width='17' height='17' viewBox='0 0 17 17'><path d='M4.5 4 L12.5 13 M12.5 4 L4.5 13' stroke='#F01010' stroke-width='2'/></svg>
<div style='left:249px;top:210px;width:745px;height:1px;background:#E3E3E3'></div>
<div style='left:368px;top:191px;width:1px;height:20px;background:#E3E3E3'></div>
<div style='left:433px;top:191px;width:1px;height:20px;background:#E3E3E3'></div>
<div style='left:583px;top:191px;width:1px;height:20px;background:#E3E3E3'></div>
<div style='left:733px;top:191px;width:1px;height:20px;background:#E3E3E3'></div>
<div style='left:753px;top:191px;width:1px;height:20px;background:#E3E3E3'></div>
<div style='left:818px;top:191px;width:1px;height:20px;background:#E3E3E3'></div>
<div style='left:883px;top:191px;width:1px;height:20px;background:#E3E3E3'></div>
<div style='left:933px;top:191px;width:1px;height:20px;background:#E3E3E3'></div>
<div style='left:953px;top:191px;width:1px;height:20px;background:#E3E3E3'></div>
<div style='left:973px;top:191px;width:1px;height:20px;background:#E3E3E3'></div>
<div style='left:993px;top:191px;width:1px;height:20px;background:#E3E3E3'></div>
<span class='t' style="top:193.7px;line-height:15px;height:15px;font:normal 11px/15px 'Liberation Sans',sans-serif;color:#000;letter-spacing:-0.271px;left:252px;transform:scale(1.0000,1.09);transform-origin:0 11.31px;">General Practitioner</span>
<span class='t' style="top:193.7px;line-height:15px;height:15px;font:normal 11px/15px 'Liberation Sans',sans-serif;color:#000;letter-spacing:-0.200px;left:372px;transform:scale(1.0000,1.09);transform-origin:0 11.31px;">Dr</span>
<span class='t' style="top:193.7px;line-height:15px;height:15px;font:normal 11px/15px 'Liberation Sans',sans-serif;color:#000;letter-spacing:-0.341px;left:437px;transform:scale(1.0000,1.09);transform-origin:0 11.31px;">Aleida Almos</span>
<span class='t' style="top:193.7px;line-height:15px;height:15px;font:normal 11px/15px 'Liberation Sans',sans-serif;color:#000;letter-spacing:-0.341px;left:587px;transform:scale(1.0000,1.09);transform-origin:0 11.31px;">Aleida Almos</span>
<span class='t' style="top:193.7px;line-height:15px;height:15px;font:normal 11px/15px 'Liberation Sans',sans-serif;color:#000;letter-spacing:-0.261px;left:757px;transform:scale(1.0000,1.09);transform-origin:0 11.31px;">04141513...</span>
<span class='t' style="top:193.7px;line-height:15px;height:15px;font:normal 11px/15px 'Liberation Sans',sans-serif;color:#000;letter-spacing:-0.200px;left:887px;transform:scale(1.0000,1.09);transform-origin:0 11.31px;">Yes</span>
<div class='btn' style='left:735px;top:192px;width:17px;height:17px;'></div>
<svg style='left:735px;top:192px' width='17' height='17' viewBox='0 0 17 17'><path d='M4.6 13.4 L13 5' stroke='#333' stroke-width='2.2'/><path d='M5.4 11.8 L12.9 4.3' stroke='#FFF200' stroke-width='1.8'/><path d='M3.4 14.2 L5.6 12' stroke='#111' stroke-width='2'/></svg>
<div class='btn' style='left:935px;top:192px;width:17px;height:17px;'></div>
<svg style='left:935px;top:192px' width='17' height='17' viewBox='0 0 17 17'><path d='M4.6 13.4 L13 5' stroke='#333' stroke-width='2.2'/><path d='M5.4 11.8 L12.9 4.3' stroke='#FFF200' stroke-width='1.8'/><path d='M3.4 14.2 L5.6 12' stroke='#111' stroke-width='2'/></svg>
<div class='btn' style='left:955px;top:192px;width:17px;height:17px;'></div>
<svg style='left:955px;top:192px' width='17' height='17' viewBox='0 0 17 17'><path d='M9.3 3.3 V13.7 M4.1 8.5 H14.5' stroke='#22E322' stroke-width='2.4'/></svg>
<div class='btn' style='left:975px;top:192px;width:17px;height:17px;'></div>
<svg style='left:975px;top:192px' width='17' height='17' viewBox='0 0 17 17'><path d='M4.5 4 L12.5 13 M12.5 4 L4.5 13' stroke='#F01010' stroke-width='2'/></svg>
<div style='left:249px;top:230px;width:745px;height:1px;background:#E3E3E3'></div>
<div style='left:368px;top:211px;width:1px;height:20px;background:#E3E3E3'></div>
<div style='left:433px;top:211px;width:1px;height:20px;background:#E3E3E3'></div>
<div style='left:583px;top:211px;width:1px;height:20px;background:#E3E3E3'></div>
<div style='left:733px;top:211px;width:1px;height:20px;background:#E3E3E3'></div>
<div style='left:753px;top:211px;width:1px;height:20px;background:#E3E3E3'></div>
<div style='left:818px;top:211px;width:1px;height:20px;background:#E3E3E3'></div>
<div style='left:883px;top:211px;width:1px;height:20px;background:#E3E3E3'></div>
<div style='left:933px;top:211px;width:1px;height:20px;background:#E3E3E3'></div>
<div style='left:953px;top:211px;width:1px;height:20px;background:#E3E3E3'></div>
<div style='left:973px;top:211px;width:1px;height:20px;background:#E3E3E3'></div>
<div style='left:993px;top:211px;width:1px;height:20px;background:#E3E3E3'></div>
<span class='t' style="top:213.7px;line-height:15px;height:15px;font:normal 11px/15px 'Liberation Sans',sans-serif;color:#000;left:252px;transform:scale(0.9266,1.09);transform-origin:0 11.31px;">Physiotherapist</span>
<span class='t' style="top:213.7px;line-height:15px;height:15px;font:normal 11px/15px 'Liberation Sans',sans-serif;color:#000;letter-spacing:-0.200px;left:372px;transform:scale(1.0000,1.09);transform-origin:0 11.31px;">Dr</span>
<span class='t' style="top:213.7px;line-height:15px;height:15px;font:normal 11px/15px 'Liberation Sans',sans-serif;color:#000;letter-spacing:-0.239px;left:437px;transform:scale(1.0000,1.09);transform-origin:0 11.31px;">Alexandra Romanova</span>
<span class='t' style="top:213.7px;line-height:15px;height:15px;font:normal 11px/15px 'Liberation Sans',sans-serif;color:#000;left:587px;transform:scale(0.8602,1.09);transform-origin:0 11.31px;">gs</span>
<span class='t' style="top:213.7px;line-height:15px;height:15px;font:normal 11px/15px 'Liberation Sans',sans-serif;color:#000;letter-spacing:-0.244px;left:757px;transform:scale(1.0000,1.09);transform-origin:0 11.31px;">25678910</span>
<span class='t' style="top:213.7px;line-height:15px;height:15px;font:normal 11px/15px 'Liberation Sans',sans-serif;color:#000;letter-spacing:-0.244px;left:822px;transform:scale(1.0000,1.09);transform-origin:0 11.31px;">25678910</span>
<span class='t' style="top:213.7px;line-height:15px;height:15px;font:normal 11px/15px 'Liberation Sans',sans-serif;color:#000;letter-spacing:-0.200px;left:887px;transform:scale(1.0000,1.09);transform-origin:0 11.31px;">Yes</span>
<div class='btn' style='left:735px;top:212px;width:17px;height:17px;'></div>
<svg style='left:735px;top:212px' width='17' height='17' viewBox='0 0 17 17'><path d='M4.6 13.4 L13 5' stroke='#333' stroke-width='2.2'/><path d='M5.4 11.8 L12.9 4.3' stroke='#FFF200' stroke-width='1.8'/><path d='M3.4 14.2 L5.6 12' stroke='#111' stroke-width='2'/></svg>
<div class='btn' style='left:935px;top:212px;width:17px;height:17px;'></div>
<svg style='left:935px;top:212px' width='17' height='17' viewBox='0 0 17 17'><path d='M4.6 13.4 L13 5' stroke='#333' stroke-width='2.2'/><path d='M5.4 11.8 L12.9 4.3' stroke='#FFF200' stroke-width='1.8'/><path d='M3.4 14.2 L5.6 12' stroke='#111' stroke-width='2'/></svg>
<div class='btn' style='left:955px;top:212px;width:17px;height:17px;'></div>
<svg style='left:955px;top:212px' width='17' height='17' viewBox='0 0 17 17'><path d='M9.3 3.3 V13.7 M4.1 8.5 H14.5' stroke='#22E322' stroke-width='2.4'/></svg>
<div class='btn' style='left:975px;top:212px;width:17px;height:17px;'></div>
<svg style='left:975px;top:212px' width='17' height='17' viewBox='0 0 17 17'><path d='M4.5 4 L12.5 13 M12.5 4 L4.5 13' stroke='#F01010' stroke-width='2'/></svg>
<div style='left:249px;top:231px;width:745px;height:20px;background:#D9D9D9'></div>
<div style='left:249px;top:250px;width:745px;height:1px;background:#c9c9c9'></div>
<div style='left:368px;top:231px;width:1px;height:20px;background:#c9c9c9'></div>
<div style='left:433px;top:231px;width:1px;height:20px;background:#c9c9c9'></div>
<div style='left:583px;top:231px;width:1px;height:20px;background:#c9c9c9'></div>
<div style='left:733px;top:231px;width:1px;height:20px;background:#c9c9c9'></div>
<div style='left:753px;top:231px;width:1px;height:20px;background:#c9c9c9'></div>
<div style='left:818px;top:231px;width:1px;height:20px;background:#c9c9c9'></div>
<div style='left:883px;top:231px;width:1px;height:20px;background:#c9c9c9'></div>
<div style='left:933px;top:231px;width:1px;height:20px;background:#c9c9c9'></div>
<div style='left:953px;top:231px;width:1px;height:20px;background:#c9c9c9'></div>
<div style='left:973px;top:231px;width:1px;height:20px;background:#c9c9c9'></div>
<div style='left:993px;top:231px;width:1px;height:20px;background:#c9c9c9'></div>
<span class='t' style="top:233.7px;line-height:15px;height:15px;font:normal 11px/15px 'Liberation Sans',sans-serif;color:#000;letter-spacing:-0.305px;left:252px;transform:scale(1.0000,1.09);transform-origin:0 11.31px;">Psychologist</span>
<span class='t' style="top:233.7px;line-height:15px;height:15px;font:normal 11px/15px 'Liberation Sans',sans-serif;color:#000;letter-spacing:-0.255px;left:437px;transform:scale(1.0000,1.09);transform-origin:0 11.31px;">Allean Anderson</span>
<span class='t' style="top:233.7px;line-height:15px;height:15px;font:normal 11px/15px 'Liberation Sans',sans-serif;color:#000;left:587px;transform:scale(0.9026,1.09);transform-origin:0 11.31px;">Allean</span>
<span class='t' style="top:233.7px;line-height:15px;height:15px;font:normal 11px/15px 'Liberation Sans',sans-serif;color:#000;letter-spacing:-0.200px;left:887px;transform:scale(1.0000,1.09);transform-origin:0 11.31px;">Yes</span>
<div style='left:931px;top:228px;width:25px;height:25px;background:#FCA850'></div>
<div class='btn' style='left:735px;top:232px;width:17px;height:17px;'></div>
<svg style='left:735px;top:232px' width='17' height='17' viewBox='0 0 17 17'><path d='M4.6 13.4 L13 5' stroke='#333' stroke-width='2.2'/><path d='M5.4 11.8 L12.9 4.3' stroke='#FFF200' stroke-width='1.8'/><path d='M3.4 14.2 L5.6 12' stroke='#111' stroke-width='2'/></svg>
<div style='left:935px;top:232px;width:17px;height:17px;background:#CCE4F7;border:1px solid #1c5a9e;box-sizing:border-box'></div>
<svg style='left:935px;top:232px' width='17' height='17' viewBox='0 0 17 17'><path d='M4.6 13.4 L13 5' stroke='#333' stroke-width='2.2'/><path d='M5.4 11.8 L12.9 4.3' stroke='#FFF200' stroke-width='1.8'/><path d='M3.4 14.2 L5.6 12' stroke='#111' stroke-width='2'/></svg>
<div class='btn' style='left:955px;top:232px;width:17px;height:17px;'></div>
<svg style='left:955px;top:232px' width='17' height='17' viewBox='0 0 17 17'><path d='M9.3 3.3 V13.7 M4.1 8.5 H14.5' stroke='#22E322' stroke-width='2.4'/></svg>
<div class='btn' style='left:975px;top:232px;width:17px;height:17px;'></div>
<svg style='left:975px;top:232px' width='17' height='17' viewBox='0 0 17 17'><path d='M4.5 4 L12.5 13 M12.5 4 L4.5 13' stroke='#F01010' stroke-width='2'/></svg>
<div style='left:994px;top:151px;width:17px;height:107px;background:#C8C8C8'></div>
<div style='left:994px;top:151px;width:17px;height:17px;background:#F0F0F0'></div>
<svg style='left:998px;top:156px' width='9' height='7' viewBox='0 0 9 7'><path d='M1 5.5 L4.5 1.8 L8 5.5' fill='none' stroke='#444' stroke-width='1.5'/></svg>
<div style='left:247px;top:252px;width:1px;height:337px;background:#7f8da6'></div>
<div style='left:248px;top:252px;width:1px;height:337px;background:#2a2a2a'></div>
<div style='left:247px;top:612px;width:1px;height:122px;background:#7f8da6'></div>
<div style='left:248px;top:612px;width:1px;height:122px;background:#2a2a2a'></div>
<div style='left:246px;top:596px;width:2px;height:9px;background:#222'></div>
<div style='left:249px;top:252px;width:984px;height:578px;background:#A5C3EF;box-shadow:0 0 14px rgba(0,0,0,.33);'></div>
<div style='left:249px;top:252px;width:984px;height:1px;background:#555'></div>
<div style='left:249px;top:253px;width:984px;height:30px;background:#fff'></div>
<span class='t' style="top:259.5px;line-height:16px;height:16px;font:normal 12px/16px 'Liberation Sans',sans-serif;color:#1a1a1a;letter-spacing:-0.081px;left:257px;">Clinician Details</span>
<div style='left:1213px;top:260px;width:19px;height:19px;background:#C75050'></div>
<span class='t' style="top:262.3px;line-height:14px;height:14px;font:bold 10px/14px 'Liberation Sans',sans-serif;color:#fff;left:1219.72px;">x</span>
<div style='left:252px;top:306px;width:980px;height:494px;background:#A5C3EF;border:2px solid #fff;border-left:4px solid #fff;border-right:1px solid #EDEDED;box-sizing:border-box'></div>
<div style='left:1230px;top:306px;width:1px;height:494px;background:#fff'></div>
<div style='left:253px;top:800px;width:979px;height:1px;background:#E6E6E6'></div>
<div style='left:253px;top:801px;width:979px;height:1px;background:#C9D6E8'></div>
<div style='left:342px;top:288px;width:119px;height:19px;background:#F0F0F0;border:1px solid #D9D9D9;border-bottom:none;box-sizing:border-box'></div>
<span class='t' style="top:290.5px;line-height:15px;height:15px;font:normal 11px/15px 'Liberation Sans',sans-serif;color:#000;letter-spacing:-0.218px;left:346.3px;transform:scale(1.0000,1.09);transform-origin:0 11.31px;">Medical Notes Settings</span>
<div style='left:461px;top:288px;width:79px;height:19px;background:#F0F0F0;border:1px solid #D9D9D9;border-bottom:none;box-sizing:border-box'></div>
<span class='t' style="top:290.5px;line-height:15px;height:15px;font:normal 11px/15px 'Liberation Sans',sans-serif;color:#000;letter-spacing:-0.288px;left:466.5px;transform:scale(1.0000,1.09);transform-origin:0 11.31px;">Other Settings</span>
<div style='left:540px;top:288px;width:101px;height:19px;background:#F0F0F0;border:1px solid #D9D9D9;border-bottom:none;box-sizing:border-box'></div>
<span class='t' style="top:290.5px;line-height:15px;height:15px;font:normal 11px/15px 'Liberation Sans',sans-serif;color:#000;letter-spacing:-0.229px;left:546px;transform:scale(1.0000,1.09);transform-origin:0 11.31px;">Discharge Settings</span>
<div style='left:641px;top:288px;width:85px;height:19px;background:#F0F0F0;border:1px solid #D9D9D9;border-bottom:none;box-sizing:border-box'></div>
<span class='t' style="top:290.5px;line-height:15px;height:15px;font:normal 11px/15px 'Liberation Sans',sans-serif;color:#000;letter-spacing:-0.197px;left:646.75px;transform:scale(1.0000,1.09);transform-origin:0 11.31px;">Appt Schedules</span>
<div style='left:252px;top:286px;width:90px;height:22px;background:#fff;border:1px solid #E3E3E3;border-bottom:none;box-sizing:border-box'></div>
<span class='t' style="top:288.5px;line-height:15px;height:15px;font:normal 11px/15px 'Liberation Sans',sans-serif;color:#000;letter-spacing:-0.265px;left:260px;transform:scale(1.0000,1.09);transform-origin:0 11.31px;">Provider Details</span>
<span class='t' style="top:322.7px;line-height:15px;height:15px;font:normal 11px/15px 'Liberation Sans',sans-serif;color:#000;letter-spacing:-0.199px;left:276px;transform:scale(1.0000,1.09);transform-origin:0 11.31px;">Main Provider Type</span>
<div style='left:400px;top:320px;width:170px;height:21px;background:#E1E1E1;border:1px solid #ADADAD;box-sizing:border-box'></div>
<span class='t' style="top:323.75px;line-height:15px;height:15px;font:normal 11px/15px 'Liberation Sans',sans-serif;color:#000;letter-spacing:-0.314px;left:404.5px;transform:scale(1.0000,1.09);transform-origin:0 11.31px;">Psychologist</span>
<svg style='left:556px;top:328.0px' width='9' height='6' viewBox='0 0 9 6'><path d='M0.5 0.5 L4.5 4.5 L8.5 0.5' fill='none' stroke='#333' stroke-width='1.1'/></svg>
<span class='t' style="top:346.7px;line-height:15px;height:15px;font:normal 11px/15px 'Liberation Sans',sans-serif;color:#000;letter-spacing:-0.175px;left:276px;transform:scale(1.0000,1.09);transform-origin:0 11.31px;">Displayed Provider Type</span>
<div style='left:400px;top:344px;width:170px;height:20px;background:#fff;border:1px solid #7A7A7A;box-sizing:border-box'></div>
<span class='t' style="top:346.7px;line-height:15px;height:15px;font:normal 11px/15px 'Liberation Sans',sans-serif;color:#000;letter-spacing:-0.196px;left:581px;transform:scale(1.0000,1.09);transform-origin:0 11.31px;">(optional)</span>
<div style='left:656px;top:325px;width:13px;height:13px;background:#fff;border:1px solid #333;box-sizing:border-box'><svg width='13' height='13' viewBox='0 0 13 13' style='left:-1px;top:-1px'><path d='M2.8 6.4 L5.3 8.9 L10.8 3.3' fill='none' stroke='#3a3a3a' stroke-width='1.15'/></svg></div>
<span class='t' style="top:325.3px;line-height:15px;height:15px;font:normal 11px/15px 'Liberation Sans',sans-serif;color:#000;letter-spacing:-0.156px;left:675px;transform:scale(1.0000,1.09);transform-origin:0 11.31px;">Is this Clinician Active?</span>
<span class='t' style="top:400.5px;line-height:15px;height:15px;font:normal 11px/15px 'Liberation Sans',sans-serif;color:#000;left:276px;transform:scale(0.9276,1.09);transform-origin:0 11.31px;">Title</span>
<div style='left:401px;top:399px;width:120px;height:21px;background:#E1E1E1;border:1px solid #ADADAD;box-sizing:border-box'></div>
<svg style='left:507px;top:407.0px' width='9' height='6' viewBox='0 0 9 6'><path d='M0.5 0.5 L4.5 4.5 L8.5 0.5' fill='none' stroke='#333' stroke-width='1.1'/></svg>
<span class='t' style="top:425.7px;line-height:15px;height:15px;font:normal 11px/15px 'Liberation Sans',sans-serif;color:#000;left:276px;transform:scale(0.9047,1.09);transform-origin:0 11.31px;">FirstName</span>
<div style='left:401px;top:424px;width:144px;height:20px;background:#fff;border:1px solid #7A7A7A;box-sizing:border-box'></div>
<span class='t' style="top:427.1px;line-height:15px;height:15px;font:normal 11px/15px 'Liberation Sans',sans-serif;color:#000;left:404.3px;transform:scale(0.9222,1.09);transform-origin:0 11.31px;">Allean</span>
<span class='t' style="top:426.7px;line-height:15px;height:15px;font:normal 11px/15px 'Liberation Sans',sans-serif;color:#000;left:553px;transform:scale(0.9317,1.09);transform-origin:0 11.31px;">Code</span>
<div style='left:593px;top:423px;width:63px;height:20px;background:#fff;border:1px solid #7A7A7A;box-sizing:border-box'></div>
<span class='t' style="top:451.3px;line-height:15px;height:15px;font:normal 11px/15px 'Liberation Sans',sans-serif;color:#000;letter-spacing:-0.369px;left:276px;transform:scale(1.0000,1.09);transform-origin:0 11.31px;">Middle Name</span>
<div style='left:401px;top:448px;width:144px;height:20px;background:#fff;border:1px solid #7A7A7A;box-sizing:border-box'></div>
<span class='t' style="top:473.7px;line-height:15px;height:15px;font:normal 11px/15px 'Liberation Sans',sans-serif;color:#000;left:276px;transform:scale(0.9184,1.09);transform-origin:0 11.31px;">Surname</span>
<div style='left:401px;top:472px;width:144px;height:20px;background:#fff;border:1px solid #7A7A7A;box-sizing:border-box'></div>
<span class='t' style="top:475.1px;line-height:15px;height:15px;font:normal 11px/15px 'Liberation Sans',sans-serif;color:#000;left:404.3px;transform:scale(0.9322,1.09);transform-origin:0 11.31px;">Anderson</span>
<span class='t' style="top:500.5px;line-height:15px;height:15px;font:normal 11px/15px 'Liberation Sans',sans-serif;color:#000;letter-spacing:-0.229px;left:276px;transform:scale(1.0000,1.09);transform-origin:0 11.31px;">Vendor</span>
<div style='left:401px;top:497px;width:170px;height:21px;background:#CCCCCC;border:1px solid #BFBFBF;box-sizing:border-box'></div>
<span class='t' style="top:500.75px;line-height:15px;height:15px;font:normal 11px/15px 'Liberation Sans',sans-serif;color:#6D6D6D;letter-spacing:-0.222px;left:405.5px;transform:scale(1.0000,1.09);transform-origin:0 11.31px;">Demo Practice Limited</span>
<svg style='left:557px;top:505.0px' width='9' height='6' viewBox='0 0 9 6'><path d='M0.5 0.5 L4.5 4.5 L8.5 0.5' fill='none' stroke='#9a9a9a' stroke-width='1.1'/></svg>
<span class='t' style="top:525.5px;line-height:15px;height:15px;font:normal 11px/15px 'Liberation Sans',sans-serif;color:#000;left:276px;transform:scale(0.9243,1.09);transform-origin:0 11.31px;">System User</span>
<div style='left:401px;top:522px;width:169px;height:21px;background:#E1E1E1;border:1px solid #ADADAD;box-sizing:border-box'></div>
<span class='t' style="top:525.75px;line-height:15px;height:15px;font:normal 11px/15px 'Liberation Sans',sans-serif;color:#000;left:405.5px;transform:scale(0.9091,1.09);transform-origin:0 11.31px;">Allean</span>
<svg style='left:556px;top:530.0px' width='9' height='6' viewBox='0 0 9 6'><path d='M0.5 0.5 L4.5 4.5 L8.5 0.5' fill='none' stroke='#333' stroke-width='1.1'/></svg>
<div style='left:573px;top:524px;width:17px;height:18px;background:#E1E1E1;border:1px solid #ADADAD;box-sizing:border-box'></div>
<span class='t' style="top:527.4px;line-height:15px;height:15px;font:normal 11px/15px 'Liberation Sans',sans-serif;color:#000;left:577.83px;transform:scale(1.0000,1.09);transform-origin:0 11.31px;">E</span>
<div style='left:591px;top:524px;width:18px;height:18px;background:#E1E1E1;border:1px solid #ADADAD;box-sizing:border-box'></div>
<span class='t' style="top:527.4px;line-height:15px;height:15px;font:normal 11px/15px 'Liberation Sans',sans-serif;color:#000;left:596.02px;transform:scale(1.0000,1.09);transform-origin:0 11.31px;">N</span>
<div style='left:269px;top:518px;width:304px;height:29px;border:4px solid #FCA850;box-sizing:border-box'></div>
<div style='left:401px;top:550px;width:13px;height:13px;background:#fff;border:1px solid #333;box-sizing:border-box'></div>
<span class='t' style="top:549.8px;line-height:15px;height:15px;font:normal 11px/15px 'Liberation Sans',sans-serif;color:#000;letter-spacing:-0.180px;left:420px;transform:scale(1.0000,1.09);transform-origin:0 11.31px;">Restrict Medical Notes Changes to this User?</span>
<span class='t' style="top:576.7px;line-height:15px;height:15px;font:normal 11px/15px 'Liberation Sans',sans-serif;color:#000;letter-spacing:-0.218px;left:275px;transform:scale(1.0000,1.09);transform-origin:0 11.31px;">Qualifications</span>
<div style='left:401px;top:574px;width:243px;height:20px;background:#fff;border:1px solid #7A7A7A;box-sizing:border-box'></div>
<span class='t' style="top:602.7px;line-height:15px;height:15px;font:normal 11px/15px 'Liberation Sans',sans-serif;color:#000;letter-spacing:-0.323px;left:276px;transform:scale(1.0000,1.09);transform-origin:0 11.31px;">NZMC Number</span>
<div style='left:401px;top:600px;width:243px;height:20px;background:#fff;border:1px solid #7A7A7A;box-sizing:border-box'></div>
<span class='t' style="top:628.7px;line-height:15px;height:15px;font:normal 11px/15px 'Liberation Sans',sans-serif;color:#000;letter-spacing:-0.303px;left:276px;transform:scale(1.0000,1.09);transform-origin:0 11.31px;">HPI Number</span>
<div style='left:400px;top:626px;width:243px;height:20px;background:#fff;border:1px solid #7A7A7A;box-sizing:border-box'></div>
<div style='left:914px;top:323px;width:208px;height:121px;border:1px solid #D6E1F1;box-sizing:border-box'></div>
<div style='left:920px;top:318px;width:92px;height:10px;background:#A5C3EF'></div>
<span class='t' style="top:316.5px;line-height:15px;height:15px;font:bold 11px/15px 'Liberation Sans',sans-serif;color:#000;left:922.5px;transform:scale(1.0927,1.09);transform-origin:0 11.31px;-webkit-text-stroke:0.3px #000;">Contact Details</span>
<span class='t' style="top:343.5px;line-height:15px;height:15px;font:normal 11px/15px 'Liberation Sans',sans-serif;color:#000;left:922.5px;transform:scale(0.9336,1.09);transform-origin:0 11.31px;">Phone</span>
<div style='left:967px;top:341px;width:128px;height:20px;background:#fff;border:1px solid #7A7A7A;box-sizing:border-box'></div>
<span class='t' style="top:367.1px;line-height:15px;height:15px;font:normal 11px/15px 'Liberation Sans',sans-serif;color:#000;left:922.5px;transform:scale(0.8586,1.09);transform-origin:0 11.31px;">Fax</span>
<div style='left:967px;top:365px;width:128px;height:20px;background:#fff;border:1px solid #7A7A7A;box-sizing:border-box'></div>
<span class='t' style="top:391.1px;line-height:15px;height:15px;font:normal 11px/15px 'Liberation Sans',sans-serif;color:#000;left:922.5px;transform:scale(0.9165,1.09);transform-origin:0 11.31px;">Mobile</span>
<div style='left:967px;top:389px;width:128px;height:20px;background:#fff;border:1px solid #7A7A7A;box-sizing:border-box'></div>
<span class='t' style="top:415px;line-height:15px;height:15px;font:normal 11px/15px 'Liberation Sans',sans-serif;color:#000;left:922.5px;transform:scale(0.8722,1.09);transform-origin:0 11.31px;">Email</span>
<div style='left:967px;top:416px;width:129px;height:20px;background:#fff;border:1px solid #7A7A7A;box-sizing:border-box'></div>
<div class='btn' style='left:1097px;top:389px;width:19px;height:20px;'></div>
<div style='left:1100px;top:392px;width:13px;height:14px;background:#fff'></div>
<svg style='left:1100px;top:391px' width='13' height='16' viewBox='0 0 13 16'><path d='M10.2 3.5 V1' stroke='#7A838C' stroke-width='1.2'/><rect x='2.6' y='3.2' width='8.4' height='11.2' rx='1.2' fill='#C9CED3' stroke='#8A929A' stroke-width='0.9'/><rect x='4' y='4.8' width='5.6' height='3.2' fill='#2E97F5'/><rect x='5' y='5.9' width='3.4' height='0.9' fill='#BFE2FF'/><rect x='4' y='9' width='2.2' height='1' fill='#4CC24C'/><rect x='7.6' y='9' width='1.6' height='1' fill='#E04545'/><path d='M4.2 11.3 H9.4 M4.2 12.9 H9.4' stroke='#8d959c' stroke-width='0.9' stroke-dasharray='1.2 0.8'/></svg>
<div class='btn' style='left:1098px;top:417px;width:18px;height:18px;'></div>
<svg style='left:1100px;top:419px' width='14' height='14' viewBox='0 0 14 14'><defs><linearGradient id='mg' x1='0' y1='0' x2='0' y2='1'><stop offset='0' stop-color='#FFF0A8'/><stop offset='1' stop-color='#F3C23E'/></linearGradient></defs><rect x='1' y='1.6' width='12' height='10' fill='url(#mg)' stroke='#D9A928' stroke-width='0.8'/><path d='M1.2 1.8 L7 7.2 L12.8 1.8' fill='#FFEFA0' stroke='#D9A928' stroke-width='0.8'/><path d='M1.2 11.4 L5.2 6.6 M12.8 11.4 L8.8 6.6' stroke='#E3B63A' stroke-width='0.7'/><path d='M1 12 H13' stroke='#4a3608' stroke-width='1'/></svg>
<div style='left:917px;top:463px;width:256px;height:193px;border:1px solid #D6E1F1;box-sizing:border-box'></div>
<div style='left:924px;top:458px;width:48px;height:10px;background:#A5C3EF'></div>
<span class='t' style="top:456.5px;line-height:15px;height:15px;font:bold 11px/15px 'Liberation Sans',sans-serif;color:#000;letter-spacing:-0.004px;left:926px;transform:scale(1.0000,1.09);transform-origin:0 11.31px;-webkit-text-stroke:0.3px #000;">Address</span>
<span class='t' style="top:472.7px;line-height:15px;height:15px;font:normal 11px/15px 'Liberation Sans',sans-serif;color:#000;letter-spacing:-0.310px;left:926px;transform:scale(1.0000,1.09);transform-origin:0 11.31px;">Search</span>
<div style='left:981px;top:473px;width:186px;height:20px;background:#fff;border:1px solid #7A7A7A;box-sizing:border-box'></div>
<span class='t' style="top:495.7px;line-height:15px;height:15px;font:normal 11px/15px 'Liberation Sans',sans-serif;color:#000;left:924px;transform:scale(0.9162,1.09);transform-origin:0 11.31px;">Street</span>
<div style='left:981px;top:496px;width:186px;height:37px;background:#fff;border:1px solid #7A7A7A;box-sizing:border-box'></div>
<div style='left:1149px;top:498px;width:16px;height:33px;background:#F0F0F0'></div>
<svg style='left:1153px;top:502px' width='8' height='6' viewBox='0 0 8 6'><path d='M0.8 5 L4 1.5 L7.2 5' fill='none' stroke='#BDBDBD' stroke-width='1.3'/></svg>
<svg style='left:1153px;top:519px' width='8' height='6' viewBox='0 0 8 6'><path d='M0.8 1 L4 4.5 L7.2 1' fill='none' stroke='#BDBDBD' stroke-width='1.3'/></svg>
<span class='t' style="top:538.7px;line-height:15px;height:15px;font:normal 11px/15px 'Liberation Sans',sans-serif;color:#000;letter-spacing:-0.364px;left:924px;transform:scale(1.0000,1.09);transform-origin:0 11.31px;">Suburb</span>
<div style='left:981px;top:539px;width:186px;height:20px;background:#fff;border:1px solid #7A7A7A;box-sizing:border-box'></div>
<span class='t' style="top:562.7px;line-height:15px;height:15px;font:normal 11px/15px 'Liberation Sans',sans-serif;color:#000;left:924px;transform:scale(0.8600,1.09);transform-origin:0 11.31px;">City</span>
<div style='left:981px;top:560px;width:186px;height:20px;background:#fff;border:1px solid #7A7A7A;box-sizing:border-box'></div>
<span class='t' style="top:586.7px;line-height:15px;height:15px;font:normal 11px/15px 'Liberation Sans',sans-serif;color:#000;left:924px;transform:scale(0.9343,1.09);transform-origin:0 11.31px;">State</span>
<div style='left:981px;top:584px;width:186px;height:20px;background:#fff;border:1px solid #7A7A7A;box-sizing:border-box'></div>
<span class='t' style="top:634.7px;line-height:15px;height:15px;font:normal 11px/15px 'Liberation Sans',sans-serif;color:#000;left:924px;transform:scale(0.9213,1.09);transform-origin:0 11.31px;">Country</span>
<div style='left:981px;top:632px;width:186px;height:20px;background:#fff;border:1px solid #7A7A7A;box-sizing:border-box'></div>
<span class='t' style="top:610.7px;line-height:15px;height:15px;font:normal 11px/15px 'Liberation Sans',sans-serif;color:#000;left:924px;transform:scale(0.9343,1.09);transform-origin:0 11.31px;">Post Code</span>
<div style='left:981px;top:608px;width:76px;height:20px;background:#fff;border:1px solid #7A7A7A;box-sizing:border-box'></div>
<span class='t' style="top:655px;line-height:15px;height:15px;font:bold 11px/15px 'Liberation Sans',sans-serif;color:#000;letter-spacing:0.371px;left:261px;transform:scale(1.0000,1.09);transform-origin:0 11.31px;-webkit-text-stroke:0.3px #000;">Provider Contract Settings</span>
<div style='left:260px;top:670px;width:967px;height:112px;background:#fff'></div>
<div style='left:260px;top:670px;width:967px;height:27px;background:#D6E6FB'></div>
<span class='t' style="top:676px;line-height:16px;height:16px;font:bold 12px/16px 'Liberation Sans',sans-serif;color:#111;left:286.3px;transform:scale(0.9035,1);transform-origin:0 12.16px;">Provider Type</span>
<span class='t' style="top:676px;line-height:16px;height:16px;font:bold 12px/16px 'Liberation Sans',sans-serif;color:#111;left:386.3px;transform:scale(0.8506,1);transform-origin:0 12.16px;">For Site</span>
<span class='t' style="top:676px;line-height:16px;height:16px;font:bold 12px/16px 'Liberation Sans',sans-serif;color:#111;left:521.3px;transform:scale(0.9023,1);transform-origin:0 12.16px;">Contract Type</span>
<span class='t' style="top:676px;line-height:16px;height:16px;font:bold 12px/16px 'Liberation Sans',sans-serif;color:#111;left:631.3px;transform:scale(0.8667,1);transform-origin:0 12.16px;">From</span>
<span class='t' style="top:676px;line-height:16px;height:16px;font:bold 12px/16px 'Liberation Sans',sans-serif;color:#111;left:706.3px;transform:scale(0.8345,1);transform-origin:0 12.16px;">To</span>
<span class='t' style="top:676px;line-height:16px;height:16px;font:bold 12px/16px 'Liberation Sans',sans-serif;color:#111;left:796.3px;transform:scale(0.9088,1);transform-origin:0 12.16px;">Billing Type</span>
<span class='t' style="top:676px;line-height:16px;height:16px;font:bold 12px/16px 'Liberation Sans',sans-serif;color:#111;left:916.3px;transform:scale(0.9101,1);transform-origin:0 12.16px;">Contract No</span>
<span class='t' style="top:676px;line-height:16px;height:16px;font:bold 12px/16px 'Liberation Sans',sans-serif;color:#111;left:1015.3px;transform:scale(0.9164,1);transform-origin:0 12.16px;">Vendor No</span>
<span class='t' style="top:676px;line-height:16px;height:16px;font:bold 12px/16px 'Liberation Sans',sans-serif;color:#111;left:1113.3px;transform:scale(0.9189,1);transform-origin:0 12.16px;">Provider No</span>
<div style='left:260px;top:697px;width:946px;height:22px;background:#D9D9D9'></div>
<div style='left:260px;top:719px;width:946px;height:22px;background:#fff'></div>
<div style='left:260px;top:670px;width:1px;height:71px;background:#A9C0DE'></div>
<div style='left:280px;top:670px;width:1px;height:71px;background:#A9C0DE'></div>
<div style='left:380px;top:670px;width:1px;height:71px;background:#A9C0DE'></div>
<div style='left:515px;top:670px;width:1px;height:71px;background:#A9C0DE'></div>
<div style='left:625px;top:670px;width:1px;height:71px;background:#A9C0DE'></div>
<div style='left:700px;top:670px;width:1px;height:71px;background:#A9C0DE'></div>
<div style='left:790px;top:670px;width:1px;height:71px;background:#A9C0DE'></div>
<div style='left:910px;top:670px;width:1px;height:71px;background:#A9C0DE'></div>
<div style='left:1009px;top:670px;width:1px;height:71px;background:#A9C0DE'></div>
<div style='left:1107px;top:670px;width:1px;height:71px;background:#A9C0DE'></div>
<div style='left:1206px;top:670px;width:1px;height:71px;background:#A9C0DE'></div>
<div style='left:1226px;top:670px;width:1px;height:71px;background:#A9C0DE'></div>
<div style='left:260px;top:670px;width:967px;height:1px;background:#A9C0DE'></div>
<div style='left:260px;top:696px;width:967px;height:1px;background:#A9C0DE'></div>
<div style='left:260px;top:718px;width:967px;height:1px;background:#A9C0DE'></div>
<div style='left:260px;top:740px;width:967px;height:1px;background:#A9C0DE'></div>
<div class='btn' style='left:262px;top:698px;width:18px;height:19px;'></div>
<svg style='left:266px;top:702px' width='9' height='12' viewBox='0 0 9 12'><path d='M4.5 11 V1.6 M1.6 4.6 L4.5 1.4 L7.4 4.6' fill='none' stroke='#000' stroke-width='1.2'/></svg>
<div style='left:281px;top:697px;width:99px;height:21px;background:#E1E1E1;border:1px solid #ADADAD;box-sizing:border-box'></div>
<div style='left:363px;top:698px;width:1px;height:19px;background:#ADADAD'></div>
<svg style='left:367px;top:705px' width='10' height='6' viewBox='0 0 10 6'><path d='M0.5 0.5 L5 5 L9.5 0.5' fill='none' stroke='#333' stroke-width='1'/></svg>
<span class='t' style="top:699.5px;line-height:16px;height:16px;font:normal 12px/16px 'Liberation Sans',sans-serif;color:#111;letter-spacing:-0.027px;left:284.3px;">Physiothera...</span>
<div style='left:381px;top:697px;width:134px;height:21px;background:#E1E1E1;border:1px solid #ADADAD;box-sizing:border-box'></div>
<div style='left:498px;top:698px;width:1px;height:19px;background:#ADADAD'></div>
<svg style='left:502px;top:705px' width='10' height='6' viewBox='0 0 10 6'><path d='M0.5 0.5 L5 5 L9.5 0.5' fill='none' stroke='#333' stroke-width='1'/></svg>
<span class='t' style="top:699.5px;line-height:16px;height:16px;font:normal 12px/16px 'Liberation Sans',sans-serif;color:#111;left:384.3px;transform:scale(0.8995,1);transform-origin:0 12.16px;">All Sites</span>
<div style='left:516px;top:697px;width:109px;height:21px;background:#E1E1E1;border:1px solid #ADADAD;box-sizing:border-box'></div>
<div style='left:608px;top:698px;width:1px;height:19px;background:#ADADAD'></div>
<svg style='left:612px;top:705px' width='10' height='6' viewBox='0 0 10 6'><path d='M0.5 0.5 L5 5 L9.5 0.5' fill='none' stroke='#333' stroke-width='1'/></svg>
<span class='t' style="top:699.5px;line-height:16px;height:16px;font:normal 12px/16px 'Liberation Sans',sans-serif;color:#111;left:519.3px;transform:scale(0.7899,1);transform-origin:0 12.16px;">EPN</span>
<div style='left:791px;top:697px;width:119px;height:21px;background:#E1E1E1;border:1px solid #ADADAD;box-sizing:border-box'></div>
<div style='left:893px;top:698px;width:1px;height:19px;background:#ADADAD'></div>
<svg style='left:897px;top:705px' width='10' height='6' viewBox='0 0 10 6'><path d='M0.5 0.5 L5 5 L9.5 0.5' fill='none' stroke='#333' stroke-width='1'/></svg>
<span class='t' style="top:699.5px;line-height:16px;height:16px;font:normal 12px/16px 'Liberation Sans',sans-serif;color:#111;left:794.3px;transform:scale(0.9332,1);transform-origin:0 12.16px;">Hourly Rate Billi...</span>
<div class='btn' style='left:1208px;top:698px;width:17px;height:19px;'></div>
<svg style='left:1208px;top:699px' width='17' height='17' viewBox='0 0 17 17'><path d='M4.5 4 L12.5 13 M12.5 4 L4.5 13' stroke='#F01010' stroke-width='2'/></svg>
<div class='btn' style='left:262px;top:720px;width:18px;height:19px;'></div>
<svg style='left:266px;top:724px' width='9' height='12' viewBox='0 0 9 12'><path d='M4.5 11 V1.6 M1.6 4.6 L4.5 1.4 L7.4 4.6' fill='none' stroke='#000' stroke-width='1.2'/></svg>
<div style='left:281px;top:719px;width:99px;height:21px;background:#E1E1E1;border:1px solid #ADADAD;box-sizing:border-box'></div>
<div style='left:363px;top:720px;width:1px;height:19px;background:#ADADAD'></div>
<svg style='left:367px;top:727px' width='10' height='6' viewBox='0 0 10 6'><path d='M0.5 0.5 L5 5 L9.5 0.5' fill='none' stroke='#333' stroke-width='1'/></svg>
<div style='left:381px;top:719px;width:134px;height:21px;background:#E1E1E1;border:1px solid #ADADAD;box-sizing:border-box'></div>
<div style='left:498px;top:720px;width:1px;height:19px;background:#ADADAD'></div>
<svg style='left:502px;top:727px' width='10' height='6' viewBox='0 0 10 6'><path d='M0.5 0.5 L5 5 L9.5 0.5' fill='none' stroke='#333' stroke-width='1'/></svg>
<div style='left:516px;top:719px;width:109px;height:21px;background:#E1E1E1;border:1px solid #ADADAD;box-sizing:border-box'></div>
<div style='left:608px;top:720px;width:1px;height:19px;background:#ADADAD'></div>
<svg style='left:612px;top:727px' width='10' height='6' viewBox='0 0 10 6'><path d='M0.5 0.5 L5 5 L9.5 0.5' fill='none' stroke='#333' stroke-width='1'/></svg>
<div style='left:791px;top:719px;width:119px;height:21px;background:#E1E1E1;border:1px solid #ADADAD;box-sizing:border-box'></div>
<div style='left:893px;top:720px;width:1px;height:19px;background:#ADADAD'></div>
<svg style='left:897px;top:727px' width='10' height='6' viewBox='0 0 10 6'><path d='M0.5 0.5 L5 5 L9.5 0.5' fill='none' stroke='#333' stroke-width='1'/></svg>
<div class='btn' style='left:1208px;top:720px;width:17px;height:19px;'></div>
<svg style='left:1208px;top:721px' width='17' height='17' viewBox='0 0 17 17'><path d='M4.5 4 L12.5 13 M12.5 4 L4.5 13' stroke='#F01010' stroke-width='2'/></svg>
<span class='t' style="top:699.5px;line-height:16px;height:16px;font:normal 12px/16px 'Liberation Sans',sans-serif;color:#111;left:629.3px;transform:scale(0.9204,1);transform-origin:0 12.16px;">25/03/21</span>
<div class='btn' style='left:649px;top:805px;width:73px;height:21px;'></div>
<span class='t' style="top:808.5px;line-height:15px;height:15px;font:normal 11px/15px 'Liberation Sans',sans-serif;color:#000;letter-spacing:-0.145px;left:671.68px;transform:scale(1.0000,1.09);transform-origin:0 11.31px;">Save</span>
<div class='btn' style='left:754px;top:805px;width:73px;height:21px;'></div>
<span class='t' style="top:808.5px;line-height:15px;height:15px;font:normal 11px/15px 'Liberation Sans',sans-serif;color:#000;letter-spacing:-0.250px;left:772.50px;transform:scale(1.0000,1.09);transform-origin:0 11.31px;">Cancel</span>
</body></html>
